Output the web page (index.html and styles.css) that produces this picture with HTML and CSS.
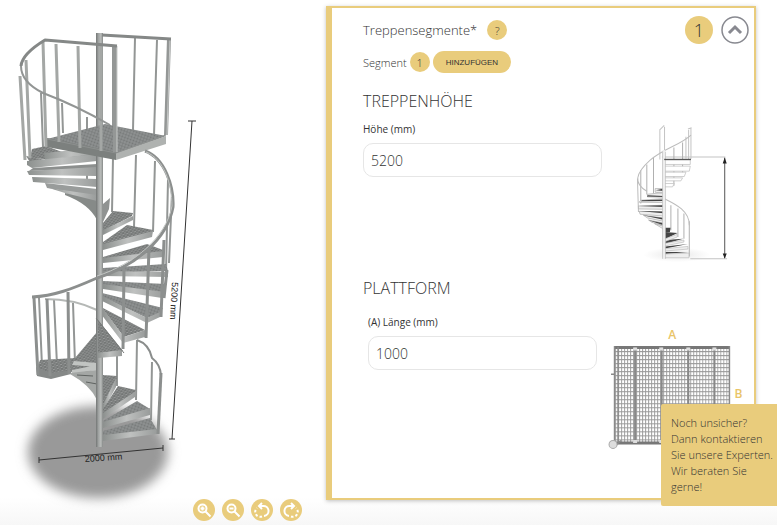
FILE: index.html
```html
<!DOCTYPE html>
<html lang="de">
<head>
<meta charset="utf-8">
<meta name="viewport" content="width=device-width, initial-scale=1">
<title>Treppenkonfigurator</title>
<link rel="stylesheet" href="styles.css">
</head>
<body>
<main class="configurator">
  <section class="viewer" aria-label="Treppenansicht">
    <svg class="model" viewBox="0 0 326 499" role="img" aria-label="Spindeltreppe">
      <defs>
        <filter id="soft" x="-25%" y="-25%" width="150%" height="150%"><feGaussianBlur stdDeviation="6"/></filter>
        <linearGradient id="pole"><stop offset="0" stop-color="#737675"/><stop offset=".35" stop-color="#a0a3a2"/><stop offset=".7" stop-color="#babdbb"/><stop offset="1" stop-color="#858887"/></linearGradient>
        <linearGradient id="face"><stop offset="0" stop-color="#8c908e"/><stop offset=".5" stop-color="#bfc1c0"/><stop offset="1" stop-color="#999c9b"/></linearGradient>
        <pattern id="grate" width="4" height="3" patternUnits="userSpaceOnUse" patternTransform="rotate(-14)"><rect width="4" height="3" fill="#747776"/><path d="M0 1h2M2 2.500h2" stroke="#a2a5a4" stroke-width=".8"/></pattern>
        <pattern id="mesh" width="3" height="3" patternUnits="userSpaceOnUse" patternTransform="rotate(20)"><rect width="3" height="3" fill="#757877"/><path d="M0 1h3M1 0v3" stroke="#a4a7a6" stroke-width=".6"/></pattern>
      </defs>
      <ellipse cx="98" cy="452" rx="70" ry="46" fill="#999" filter="url(#soft)"/>

      <!-- rear posts -->
      <g stroke="#939695" stroke-width="2" fill="none">
        <path d="M41 93l2 54M62 103l1 30M87 117v40M87 168v14M113 46v81M135 38l-2 92M157 40l-3 95"/>
        <path d="M113 158l-1 54M136 155l-2 72M155 161l-2 71M168 180l-2 93M172 193l-3 70"/>
        <path d="M39 298l3 68M54 300l3 65M73 303l2 60M117 356v30M137 340l-1 60M152 362l-1 58"/>
        <path d="M45 299Q74 299 97 310" stroke="#b5b8b6"/>
      </g>

      <!-- upper flight -->
      <path d="M32 149l14-3 16 6-5 8-27-2z" fill="url(#grate)"/>
      <path d="M44 153l30-3 24 2v4l-53 4z" fill="url(#face)"/>
      <path d="M26 156l19 4 52-6-65 11z" fill="url(#grate)"/>
      <path d="M27 161l70-7v7l-65 7-5-3z" fill="url(#face)"/>
      <path d="M33 168l64-4v4l-68 3z" fill="#8c8f8e"/>
      <path d="M27 171l70-4v9l-68-1z" fill="url(#face)"/>
      <path d="M32 177l65 2v8l-64-5z" fill="url(#face)"/>
      <path d="M45 183l52 6v7l-50-8z" fill="#999c9b"/>
      <path d="M49 188l48 7v11l-32-13z" fill="url(#face)"/>
      <path d="M65 193l32 8v19q-8-16-32-25z" fill="#868a88"/>
      <path d="M103 204l7-6-1 11-6 13z" fill="#909392"/>

      <!-- middle flight -->
      <path d="M103 223l10-12 20 2-1 3-29 15z" fill="url(#grate)"/><path d="M103 230l30-14v4l-30 15z" fill="url(#face)"/>
      <path d="M103 242l24-17 26 5-1 2-49 13z" fill="url(#grate)"/><path d="M103 244l50-13-1 6-49 13z" fill="url(#face)"/>
      <path d="M103 257l44-13 16 6-1 2-59 7z" fill="url(#grate)"/><path d="M103 258l60-7v6l-60 6z" fill="url(#face)"/>
      <path d="M103 268l63-4 2 7-65 2z" fill="url(#mesh)"/><path d="M103 271l65 1v5l-65-1z" fill="url(#face)"/>
      <path d="M103 281l63 3-2 10-61-8z" fill="url(#mesh)"/><path d="M103 284l62 8-3 6-59-9z" fill="url(#face)"/>
      <path d="M102 293l61 15-4 6-12 4-45-21z" fill="url(#mesh)"/><path d="M102 296l45 22 15-7-2 6-13 6-45-22z" fill="url(#face)"/>
      <path d="M101 307l44 23-21 7z" fill="url(#grate)"/><path d="M101 306l23 31 21-7v7l-22 6-22-29z" fill="url(#face)"/>

      <!-- lower flight -->
      <path d="M97 332L75 358l-35 2-3 9 13 6 22-3 10 3 15-8z" fill="url(#grate)"/>
      <path d="M36 367l15 6 20-3v4l-20 5-14-3z" fill="#858887"/>
      <path d="M74 361l23 2v4l-25-2zM72 370l25-5v5l-25 4z" fill="#c1c4c2"/>
      <path d="M70 373l27-3v30q-7-15-27-26z" fill="#a4a7a5"/><path d="M77 375l16 1M86 382l11 2" stroke="#5f6361"/>
      <path d="M103 375l14 1-1 9-13 25z" fill="url(#grate)"/><path d="M103 405l13-27v9l-13 24z" fill="url(#face)"/>
      <path d="M103 409l15-23 18 4-2 4-31 22z" fill="url(#grate)"/><path d="M103 413l33-22-1 6-32 22z" fill="url(#face)"/>
      <path d="M103 421l34-20 13 8-47 16z" fill="url(#mesh)"/><path d="M103 422l47-14v7l-47 13z" fill="url(#face)"/>
      <path d="M103 431l47-13 7 12-54 7z" fill="url(#mesh)"/><path d="M103 435l54-6v5l-54 7z" fill="url(#face)"/>

      <rect x="96" y="33" width="7" height="414" fill="url(#pole)"/>
      <path d="M98 320l25 31-25 2z" fill="url(#grate)"/><path d="M97 353l25-3v6l-24 2z" fill="url(#face)"/>
      <path d="M96 318l28 35" stroke="#777a79" stroke-width="1"/>

      <!-- platform -->
      <path d="M47 139l58-15 61 12-50 20z" fill="url(#mesh)"/>
      <path d="M47 138l69 14v8l-69-13z" fill="#7c807e"/>
      <path d="M116 153l50-17v8l-50 16z" fill="#afb2b0"/>
      <path d="M47 139l69 14 50-18" fill="none" stroke="#8d908f"/>

      <!-- upper railing -->
      <g fill="none" stroke="#a4a7a5" stroke-width="3">
        <path d="M43 42l3 105M56 44l3 98M78 46l2 102M101 46v105M26 60l4 98M20 76l5 84"/>
        <path d="M169 38l-3 97M115 45v107" stroke="#949796" stroke-width="4"/>
        <path d="M170 38l-3 97M117 46v106" stroke="#c8cac9" stroke-width="1"/>
      </g>
      <g fill="none" stroke="#858887" stroke-width="3" stroke-linejoin="round">
        <path d="M102 35l69 4M117 46L45 40Q22 54 21 66"/>
        <path d="M21 66q0 16 22 27 32 12 67 32" stroke="#929594" stroke-width="2"/>
      </g>

      <!-- front posts and handrail -->
      <g fill="none" stroke="#8c8f8e" stroke-width="3">
        <path d="M124 267l-1 82M149 248l-3 90M164 240l-3 77M167 270l-3 28"/>
        <path d="M34 298l4 77M47 299l3 77M68 292l1 82"/>
        <path d="M161 373l-3 61"/>
        <path d="M137 340q12 4 15 18 8 6 9 17" stroke="#8a8d8c" stroke-width="2"/>
        <path d="M145 151c20 7 29 36 28 56-6 33-38 59-76 71-25 11-43 18-65 19"/>
        <path d="M146 152c18 7 26 32 26 54-6 32-38 58-75 70" stroke="#c1c4c2" stroke-width="1"/>
      </g>

      <!-- dimensions -->
      <g fill="none" stroke="#333" stroke-width="1">
        <path d="M192 121L172 439M188 121h8M169 439h6M39 460l124-12M39 457v6M163 445v6"/>
      </g>
      <text class="measure" transform="translate(172 282) rotate(93)">5200 mm</text>
      <text class="measure" transform="translate(85 462) rotate(-4)">2000 mm</text>
    </svg>
    <div class="toolbar">
      <button class="tool" type="button" aria-label="Vergrößern"><svg viewBox="0 0 22 22"><circle cx="9.500" cy="9.500" r="4"/><path d="M12.500 12.500l5 5M7.500 9.500h4M9.500 7.500v4"/></svg></button>
      <button class="tool" type="button" aria-label="Verkleinern"><svg viewBox="0 0 22 22"><circle cx="9.500" cy="9.500" r="4"/><path d="M12.500 12.500l5 5M7.500 9.500h4"/></svg></button>
      <button class="tool" type="button" aria-label="Nach links drehen"><svg viewBox="0 0 22 22"><path d="M9 7h3a5 5 0 0 1 1 10"/><path d="M11 4L8 7l3 3"/><path d="M11 17.500A5 5 0 0 1 6 9" stroke-dasharray="2.500 2"/></svg></button>
      <button class="tool" type="button" aria-label="Nach rechts drehen"><svg viewBox="0 0 22 22"><path d="M13 7h-3a5 5 0 0 0-1 10"/><path d="M11 4l3 3-3 3"/><path d="M11 17.500A5 5 0 0 0 16 9" stroke-dasharray="2.500 2"/></svg></button>
    </div>
  </section>

  <form class="card">
    <header class="card-head">
      <h1 class="title">Treppensegmente*</h1>
      <button class="badge help" type="button" aria-label="Hilfe">?</button>
      <span class="badge count">1</span>
      <button class="collapse" type="button" aria-label="Einklappen"><svg viewBox="0 0 28 28"><circle cx="14" cy="14" r="13"/><path class="chevron" d="M8 17l6-6 6 6"/></svg></button>
    </header>
    <div class="segment">
      <span>Segment</span>
      <span class="badge">1</span>
      <button class="add" type="button">HINZUFÜGEN</button>
    </div>

    <section class="group">
      <h2 class="heading">TREPPENHÖHE</h2>
      <div class="row">
        <div class="field">
          <label for="height">Höhe (mm)</label>
          <input id="height" type="text" value="5200">
        </div>
        <svg class="figure" viewBox="0 0 152 144" role="img" aria-label="Treppenhöhe">
          <defs><radialGradient id="ground"><stop offset="0" stop-color="#e8e8e8"/><stop offset="1" stop-color="#fff"/></radialGradient></defs>
          <g transform="translate(18 -6) scale(.3333)" fill="none">
            <ellipse cx="170" cy="418" rx="100" ry="22" fill="url(#ground)"/>
            <g stroke="#c4c4c4" stroke-width="3">
              <path d="M119 45v88M133 35v98M118 45l14-14M197 65v65M205 45v100M212 40v92M203 42l11-4"/>
              <path d="M125 126h190M210 430h110"/>
            </g>
            <g stroke="#b0b0b0" stroke-width="3">
              <path d="M100 128v107M80 148v90M62 165v100M187 82v100M161 97v115M152 270v75M173 280v85M191 295v75M207 318v105"/>
              <path d="M212 60C180 90 130 100 90 135 45 175 40 205 80 228M52 190l3 100M132 250c30 15 76 35 75 80" stroke="#bcbcbc"/>
            </g>
            <path d="M132 134h78v14h-78zM132 153h78l-3 15h-75zM132 171h65l-5 13h-60zM132 188h55l-5 9h-50zM132 205h30l-5 10h-25z" fill="#fff" stroke="#b8b8b8" stroke-width="2"/>
            <path d="M105 220l25 0v14l-25-3zM82 237l48-5v14l-48-1zM62 255l68-5v12l-73-1zM55 272l75-2v12l-75-1zM57 288l73 2v12l-70-5zM70 300l60 8v10l-48-10zM85 314l45 9v8l-35-10zM103 325l27 8v8z" fill="#eee" stroke="#aaa" stroke-width="2"/>
            <path d="M107 225l24-5v7zM83 240l47 2v3l-50-1zM66 255l64-2v4l-68 1zM56 272l74-2v5zM56 287l74 2v5zM68 300l62 8v5zM85 315l45 9v6zM135 337l16 0-2 13-14 0zM135 350l37 3-37 18zM135 374l54-4-54 15zM135 393l68-7-68 13zM135 410l68 0-68 6z" fill="#444"/>
            <path d="M133 371l38-14v8l-36 13zM133 384l58-10v6l-58 12zM133 400l70-7v8l-70 6zM133 416l73-3v14h-73z" fill="#eee" stroke="#bbb" stroke-width="2"/>
            <path d="M131 105v325" stroke="#eee" stroke-width="8"/><path d="M127 110v320M136 110v320" stroke="#bbb" stroke-width="2"/>
            <path d="M132 133h80" stroke="#555" stroke-width="4"/>
            <path d="M313 128v300" stroke="#555" stroke-width="3"/><path d="M307 145l6-18 6 18zM307 414l6 16 6-16z" fill="#222"/>
          </g>
        </svg>
      </div>
    </section>

    <section class="group">
      <h2 class="heading">PLATTFORM</h2>
      <div class="row row-platform">
        <div class="field field-inset">
          <label for="length">(A) Länge (mm)</label>
          <input id="length" type="text" value="1000">
        </div>
        <svg class="figure" viewBox="0 0 152 138" role="img" aria-label="Plattform mit den Maßen A und B">
          <defs><pattern id="grid" x="13" y="33" width="3" height="4" patternUnits="userSpaceOnUse"><path d="M0 .5h3M.5 0v4" fill="none" stroke="#999" stroke-width=".8"/></pattern></defs>
          <rect x="13" y="33" width="114" height="96" fill="url(#grid)"/>
          <path d="M12 33.500h115M12 128.500h115" stroke="#777" stroke-width="3"/>
          <path d="M12.500 32v97M16 33v95M127 32v97" stroke="#8a8a8a" stroke-width="1.500"/>
          <path d="M33 33v95M59.500 33v95M86 33v95M112 33v95" stroke="#888" stroke-width="2"/>
          <path d="M31 35h4M57 35h4M84 35h4M110 35h4M31 127h4M57 127h4" stroke="#ddd" stroke-width="3"/>
          <path d="M12 60h-3M14 131l5-5" stroke="#888" stroke-width="1.500"/>
          <circle cx="11" cy="130" r="4" fill="#ddd" stroke="#aaa"/>
          <text class="axis" x="70" y="25" text-anchor="middle">A</text>
          <text class="axis" x="136" y="84" text-anchor="middle">B</text>
        </svg>
      </div>
    </section>
  </form>
</main>
<aside class="notice">Noch unsicher?<br>Dann kontaktieren Sie unsere Experten. Wir beraten Sie gerne!</aside>
</body>
</html>
```
FILE: styles.css
```css
* {
  box-sizing: border-box;
}

body {
  margin: 0;
  min-height: 100vh;
  background: linear-gradient(to top, #f7f7f7, #fff 28px);
  color: #333;
  font-family: "Open Sans", "Noto Sans", sans-serif;
  font-weight: 300;
}

button,
input {
  margin: 0;
  color: inherit;
  font: inherit;
}

button {
  padding: 0;
  border: 0;
  cursor: pointer;
}

.configurator {
  display: grid;
  grid-template-columns: 326fr 430fr;
  align-items: start;
  padding-right: 21px;
}

.model {
  display: block;
  width: 100%;
  overflow: visible;
}

.measure {
  fill: #222;
  font: 400 9px "Liberation Sans", Arial, sans-serif;
}

.toolbar {
  display: flex;
  justify-content: flex-end;
  gap: 7px;
  padding-right: 24px;
}

.tool {
  position: relative;
  width: 22px;
  height: 22px;
  border-radius: 50%;
  background: #e9cc7c;
}

.tool svg {
  display: block;
  fill: none;
  stroke: #fff;
  stroke-width: 2;
}

.card {
  margin-top: 6px;
  padding: 8px 0 45px 31px;
  border: 2px solid #e9cc7c;
  border-left-width: 6px;
  background: #fff;
  box-shadow: 0 1px 4px rgba(0, 0, 0, 0.25);
}

.card-head {
  display: flex;
  align-items: center;
  padding-right: 5px;
}

.title,
.heading {
  margin: 0;
  font-weight: 300;
}

.title {
  font-size: 13px;
  line-height: 20px;
}

.badge {
  display: grid;
  place-items: center;
  width: 20px;
  height: 20px;
  border-radius: 50%;
  background: #e9cc7c;
}

.help {
  margin-left: 10px;
  font-size: 11px;
}

.count {
  width: 28px;
  height: 28px;
  margin-left: auto;
  font-size: 18px;
}

.collapse {
  width: 28px;
  height: 28px;
  margin-left: 8px;
  background: none;
}

.collapse svg {
  display: block;
  fill: none;
  stroke: #888990;
  stroke-width: 1.5;
}

.collapse .chevron {
  stroke-width: 3;
}

.segment {
  display: flex;
  align-items: center;
  gap: 3px;
  margin-top: 7px;
  font-size: 11px;
}

.add {
  height: 22px;
  padding: 0 13px;
  border-radius: 11px;
  background: #e9cc7c;
  font: 400 8px "Liberation Sans", Arial, sans-serif;
}

.group {
  margin-top: 18px;
}

.group + .group {
  margin-top: 13px;
}

.heading {
  font-size: 16px;
  line-height: 20px;
}

.row {
  display: grid;
  grid-template-columns: 61fr 39fr;
  align-items: start;
  margin-top: 10px;
}

.row-platform {
  margin-top: 16px;
}

.field {
  display: grid;
  gap: 6px;
}

.field-inset {
  padding: 0 5px;
}

.field label {
  font-size: 10px;
  font-weight: 400;
  line-height: 16px;
}

.field input {
  width: 100%;
  height: 34px;
  padding: 0 7px;
  border: 1px solid #e6e6e6;
  border-radius: 10px;
  background: #fff;
  font-size: 14px;
}

.figure {
  display: block;
  width: 100%;
}

.axis {
  fill: #e9c468;
  font: 600 12px "Open Sans", sans-serif;
}

.notice {
  position: fixed;
  right: 0;
  bottom: 19px;
  width: 116px;
  padding: 11px 2px 11px 10px;
  border-radius: 2px 0 0 2px;
  background: #e9cc7c;
  font-size: 11px;
  line-height: 16px;
}
```
